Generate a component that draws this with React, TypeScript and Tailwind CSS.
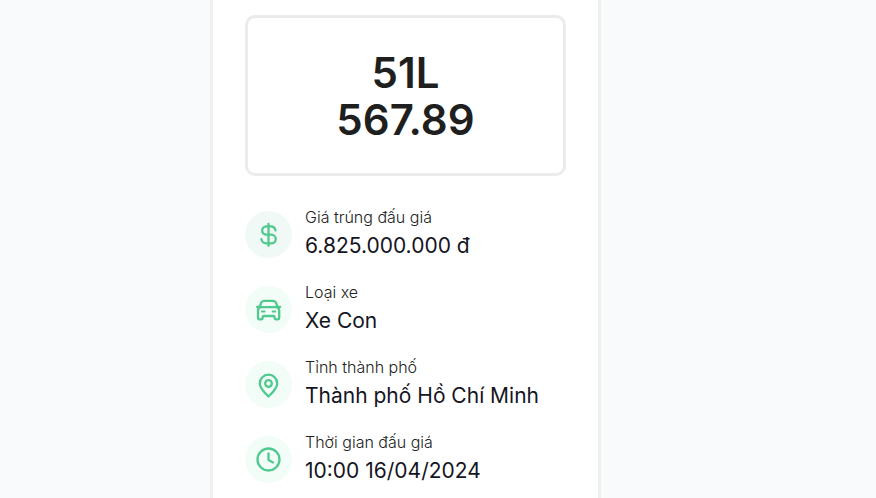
import type { ReactNode } from "react";

function Icon({ children }: { children: ReactNode }) {
  return (
    <svg
      viewBox="0 0 28 28"
      className="size-7 text-[#4fc98e]"
      fill="none"
      stroke="currentColor"
      strokeWidth={2.3}
      strokeLinecap="round"
      strokeLinejoin="round"
      aria-hidden="true"
    >
      {children}
    </svg>
  );
}

const rows = [
  {
    label: "Giá trúng đấu giá",
    value: "6.825.000.000 đ",
    tint: "bg-[#f0f9f6]",
    icon: (
      <Icon>
        <path d="M13.5 2.8V24.8M20.4 9.4A4.8 4.8 0 0 0 15.6 5.3H11.4A4.2 4.2 0 0 0 11.4 13.7H16.4A4.3 4.3 0 0 1 16.4 22.4H11.2A4.8 4.8 0 0 1 6.4 18.2" />
      </Icon>
    ),
  },
  {
    label: "Loại xe",
    value: "Xe Con",
    tint: "bg-[#f2fdf8]",
    icon: (
      <Icon>
        <path d="M4.6 11L6.2 6.8Q7 4.9 9 4.9H18.2Q20.2 4.9 21 6.8L22.6 11M2 10.8H4.5M22.7 10.8H25.2" />
        <path d="M6.5 11.2H20.7Q24.2 11.2 24.2 14.7V21.8Q24.2 23.3 22.7 23.3H21.1Q19.6 23.3 19.6 21.8V21.4Q19.6 20 18.2 20H9Q7.6 20 7.6 21.4V21.8Q7.6 23.3 6.1 23.3H4.5Q3 23.3 3 21.8V14.7Q3 11.2 6.5 11.2Z" />
        <path strokeWidth={2} d="M6.9 15.5H9.6M17.6 15.5H20.3" />
      </Icon>
    ),
  },
  {
    label: "Tỉnh thành phố",
    value: "Thành phố Hồ Chí Minh",
    tint: "bg-[#f2fdf8]",
    icon: (
      <Icon>
        <path d="M13.5 25.5C10.5 22.5 4.8 17.5 4.8 12.4A8.7 8.7 0 0 1 22.2 12.4C22.2 17.5 16.5 22.5 13.5 25.5Z" />
        <circle cx="13.5" cy="12.5" r="3.3" />
      </Icon>
    ),
  },
  {
    label: "Thời gian đấu giá",
    value: "10:00 16/04/2024",
    tint: "bg-[#f2fdf8]",
    icon: (
      <Icon>
        <circle cx="13.5" cy="13.5" r="11" />
        <path d="M13.5 7.5V14L18 16.4" />
      </Icon>
    ),
  },
];

export default function App() {
  return (
    <div className="h-screen overflow-hidden bg-[#f9fafc] pr-[65px] font-['Inter',sans-serif]">
      <main className="mx-auto min-h-screen w-full max-w-[391px] border-x-3 border-[#efefef] bg-white px-8 pt-[15px]">
        <h1 className="rounded-[10px] border-3 border-[#ebebee] pt-[31px] pb-[30px] text-center text-[42px] leading-[47px] font-semibold text-[#1f1f1f]">
          51L
          <br />
          567.89
        </h1>
        <dl className="mt-[29px] flex flex-col gap-[17px]">
          {rows.map(({ icon, label, value, tint }) => (
            <div key={label} className="flex items-start gap-[13px]">
              <span className={`mt-1.5 flex size-[47px] shrink-0 items-center justify-center rounded-full ${tint}`}>
                {icon}
              </span>
              <div className="whitespace-nowrap">
                <dt className="text-base leading-6 font-light text-[#222222]">{label}</dt>
                <dd className="text-[21px] leading-[34px] text-[#15151f]">{value}</dd>
              </div>
            </div>
          ))}
        </dl>
      </main>
    </div>
  );
}
